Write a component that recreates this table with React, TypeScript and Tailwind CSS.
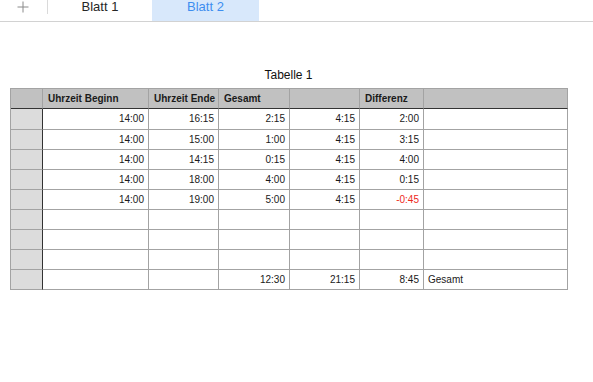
import React from 'react';

const cols = ['w-[32px]', 'w-[106px]', 'w-[70px]', 'w-[71px]', 'w-[70px]', 'w-[64px]', 'w-[144px]'];

const headers = ['', 'Uhrzeit Beginn', 'Uhrzeit Ende', 'Gesamt', '', 'Differenz', ''];

const rows: string[][] = [
  ['14:00', '16:15', '2:15', '4:15', '2:00', ''],
  ['14:00', '15:00', '1:00', '4:15', '3:15', ''],
  ['14:00', '14:15', '0:15', '4:15', '4:00', ''],
  ['14:00', '18:00', '4:00', '4:15', '0:15', ''],
  ['14:00', '19:00', '5:00', '4:15', '-0:45', ''],
  ['', '', '', '', '', ''],
  ['', '', '', '', '', ''],
  ['', '', '', '', '', ''],
  ['', '', '12:30', '21:15', '8:45', 'Gesamt'],
];

export default function App() {
  return (
    <div className="w-[593px] h-[382px] bg-white overflow-hidden text-[#1a1a1a]" style={{ fontFamily: '"Liberation Sans", Arial, sans-serif' }}>
      {/* Sheet tabs */}
      <div className="flex h-[22px] border-b border-[#d2d2d2] text-[13px] leading-[14px]">
        <div className="w-[47px] flex justify-center items-start pt-[1px] pr-[2px]">
          <svg width="12" height="12" viewBox="0 0 12 12" className="text-[#8a8a8a]">
            <path d="M6 0.5V11.5M0.5 6H11.5" stroke="currentColor" strokeWidth="1" fill="none" />
          </svg>
        </div>
        <div className="w-px h-[14px] bg-[#dadada]" />
        <div className="w-[104px] text-center text-[#262626]">Blatt 1</div>
        <div className="w-[107px] text-center bg-[#d8e8fb] text-[#3d8ef0]">Blatt 2</div>
      </div>

      {/* Title */}
      <div className="mt-[46px] w-[577px] text-center text-[12px] leading-[14px] text-[#111]">Tabelle 1</div>

      {/* Table */}
      <div className="mt-[6px] ml-[10px] w-[558px] border-l border-t border-[#a3a3a3] text-[10px] leading-[12px]">
        <div className="flex h-[20px]">
          {headers.map((h, i) => (
            <div
              key={i}
              className={`${cols[i]} shrink-0 bg-[#c1c1c1] border-r border-b border-r-[#a3a3a3] border-b-[#333] font-bold px-[5px] flex items-center whitespace-nowrap`}
            >
              {h}
            </div>
          ))}
        </div>
        {rows.map((r, ri) => (
          <div key={ri} className={`flex ${ri === 0 ? 'h-[21px]' : 'h-[20px]'}`}>
            <div className={`${cols[0]} shrink-0 bg-[#dcdcdc] border-r border-b border-r-[#333] border-b-[#a3a3a3]`} />
            {r.map((c, ci) => (
              <div
                key={ci}
                className={`${cols[ci + 1]} shrink-0 border-r border-b border-[#a3a3a3] flex items-center whitespace-nowrap ${
                  ci === 5 ? 'justify-start pl-[4px]' : 'justify-end pr-[4px]'
                } ${c.startsWith('-') ? 'text-[#ee2a1b]' : ''}`}
              >
                {c}
              </div>
            ))}
          </div>
        ))}
      </div>
    </div>
  );
}
